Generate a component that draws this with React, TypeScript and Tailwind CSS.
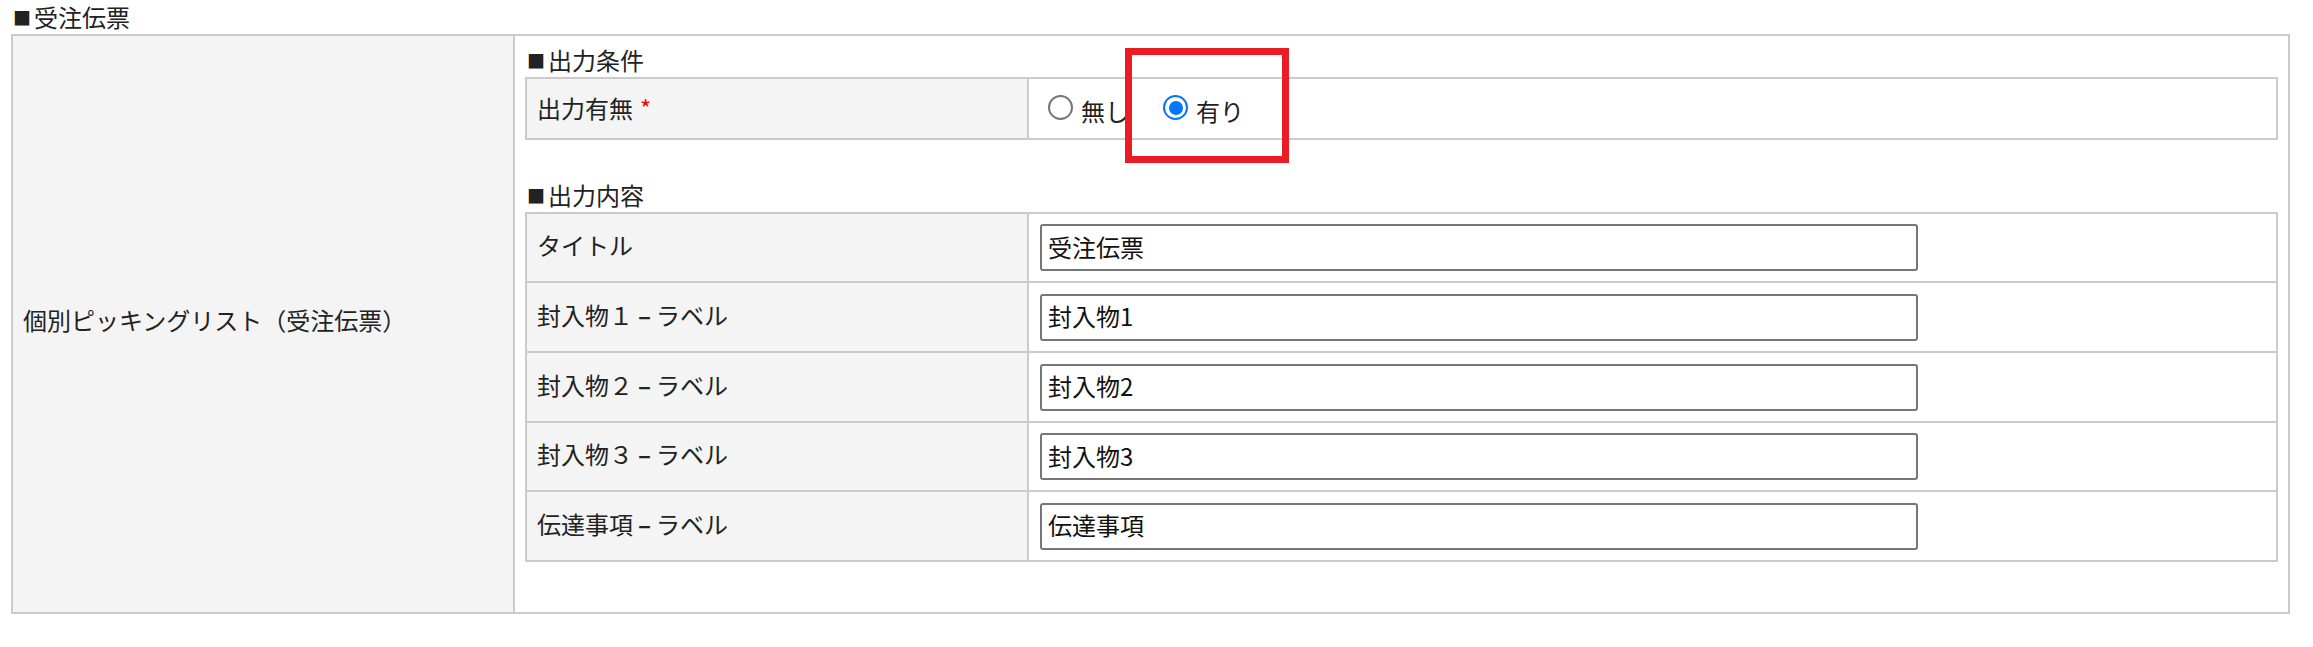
import React from 'react';

interface ContentRow {
  label: string;
  suffix?: string;
  value: string;
  height: string;
}

const contentRows: ContentRow[] = [
  { label: 'タイトル', value: '受注伝票', height: 'h-[67px]' },
  { label: '封入物１', suffix: 'ラベル', value: '封入物1', height: 'h-[68px]' },
  { label: '封入物２', suffix: 'ラベル', value: '封入物2', height: 'h-[68px]' },
  { label: '封入物３', suffix: 'ラベル', value: '封入物3', height: 'h-[67px]' },
  { label: '伝達事項', suffix: 'ラベル', value: '伝達事項', height: 'h-[68px]' },
];

const Heading: React.FC<{ text: string; className?: string }> = ({ text, className = '' }) => (
  <div className={`h-[34px] leading-[34px] whitespace-nowrap ${className}`}>
    <span className="text-[18px] mr-[3px] align-[2px]">■</span>
    {text}
  </div>
);

const Radio: React.FC<{ label: string; checked?: boolean }> = ({ label, checked }) => (
  <label className="flex items-center gap-[8px]">
    {checked ? (
      <span className="shrink-0 w-[25px] h-[25px] rounded-full border-2 border-[#0075ff] bg-white flex items-center justify-center">
        <span className="w-[14px] h-[14px] rounded-full bg-[#0075ff]" />
      </span>
    ) : (
      <span className="shrink-0 w-[25px] h-[25px] rounded-full border-2 border-[#767676] bg-white" />
    )}
    <span className="leading-[34px] pt-[6px]">{label}</span>
  </label>
);

const App: React.FC = () => {
  return (
    <div className="relative min-h-[647px] bg-white text-[#222] text-[24px] font-['Noto_Sans_CJK_JP','Noto_Sans_CJK_SC',sans-serif]">
      <Heading text="受注伝票" className="pl-[13px]" />

      <div className="ml-[11px] w-[2279px] flex border-2 border-[#cbcbcb]">
        <div className="w-[500px] shrink-0 bg-[#f3f4f3] flex items-center pl-[10px] pb-[8px] whitespace-nowrap">
          個別ピッキングリスト（受注伝票）
        </div>

        <div className="flex-1 border-l-2 border-[#cbcbcb] px-[10px] pt-[7px] pb-[12px]">
          <Heading text="出力条件" className="pl-[2px]" />
          <div className="flex border-2 border-[#cbcbcb] mb-[38px]">
            <div className="w-[500px] shrink-0 h-[59px] bg-[#f3f4f3] flex items-center pl-[10px] pb-[2px]">
              出力有無<span className="text-[#ff0000] ml-[7px]">*</span>
            </div>
            <div className="flex-1 border-l-2 border-[#cbcbcb] flex items-center gap-[34px] pl-[19px] pb-[2px]">
              <Radio label="無し" />
              <Radio label="有り" checked />
            </div>
          </div>

          <Heading text="出力内容" className="pl-[2px]" />
          <div className="border-2 border-[#cbcbcb] mb-[38px]">
            {contentRows.map((row, i) => (
              <div
                key={row.value}
                className={`flex ${i < contentRows.length - 1 ? 'border-b-2 border-[#cbcbcb]' : ''}`}
              >
                <div className={`w-[500px] shrink-0 ${row.height} bg-[#f3f4f3] flex items-center pl-[10px] pb-[5px] whitespace-nowrap`}>
                  {row.label}
                  {row.suffix && (
                    <>
                      <span className="mx-[5px] font-bold">–</span>
                      {row.suffix}
                    </>
                  )}
                </div>
                <div className="flex-1 border-l-2 border-[#cbcbcb] flex items-center pl-[11px]">
                  <input
                    type="text"
                    defaultValue={row.value}
                    className="w-[878px] h-[47px] rounded-[3px] border-2 border-[#767676] px-[6px] pb-[3px] text-[24px] text-[#111] bg-white outline-none"
                  />
                </div>
              </div>
            ))}
          </div>
        </div>
      </div>

      {/* highlight annotation */}
      <div className="absolute left-[1125px] top-[48px] w-[164px] h-[115px] border-[7px] border-[#ec1c24] pointer-events-none" />
    </div>
  );
};

export default App;
